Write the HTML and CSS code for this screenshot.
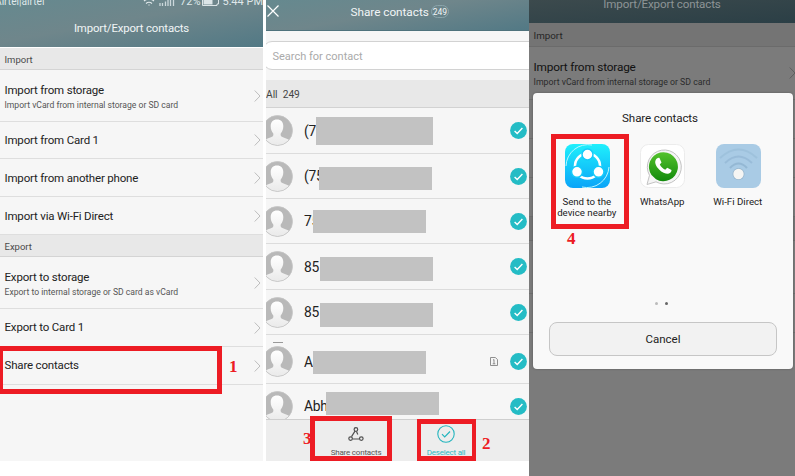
FILE: index.html
```html
<!DOCTYPE html>
<html lang="en">
<head>
<meta charset="utf-8">
<title>Share contacts</title>
<link rel="stylesheet" href="styles.css">
</head>
<body>
<svg class="defs" width="0" height="0">
  <defs>
    <linearGradient id="body" x1="0" y1="0" x2="0" y2="1"><stop offset="0" stop-color="#fff"/><stop offset="1" stop-color="#e9e9e9"/></linearGradient>
    <linearGradient id="blue" x1="0" y1="0" x2="0" y2="1"><stop offset="0" stop-color="#1ff0fc"/><stop offset="1" stop-color="#0aa4f8"/></linearGradient>
    <linearGradient id="green" x1="0" y1="0" x2="0" y2="1"><stop offset="0" stop-color="#54c22c"/><stop offset="1" stop-color="#128a0c"/></linearGradient>
    <clipPath id="round"><circle cx="15.5" cy="15.5" r="15"/></clipPath>
    <clipPath id="tile"><rect width="45" height="44" rx="8"/></clipPath>
    <symbol id="avatar" viewBox="0 0 31 31">
      <circle cx="15.5" cy="15.5" r="15" fill="#b9b9b9"/>
      <path clip-path="url(#round)" fill="url(#body)" d="M15 4.500c4 0 6.300 2.700 6.300 6.700 0 3-1 5.500-2.600 7.200-.3 2.300.2 3 2.300 3.900 3.500 1.300 6 2 7 3.700L25 31H5l-3-5c1-1.700 3.500-2.400 7-3.700 2.100-.9 2.600-1.600 2.300-3.900C9.700 16.700 8.700 14.200 8.700 11.200c0-4 2.300-6.700 6.300-6.700z"/>
      <circle cx="15.500" cy="15.500" r="15" fill="none" stroke="#c4c4c4" stroke-width=".8"/>
    </symbol>
    <symbol id="check" viewBox="0 0 17 17"><circle cx="8.500" cy="8.500" r="8.400" fill="#24bcc5"/><path d="M4.600 9l2.600 2.500 5.200-5.500" fill="none" stroke="#fff" stroke-width="1.400"/></symbol>
    <symbol id="chevron" viewBox="0 0 7 12"><path d="M.7.500l5.300 5.500-5.300 5.500" fill="none" stroke="currentColor" stroke-width="1"/></symbol>
  </defs>
</svg>
<main class="stage">
  <section class="screen menu">
    <header class="top top-menu">
      <div class="status">
        <span class="carrier">Airtel|airtel</span>
        <svg class="wifi" width="12" height="8" viewBox="0 0 12 8"><path d="M1 3q5-4 10 0M3 5.500q3-2.500 6 0M6 7.500v-1" fill="none" stroke="#e3eaec" stroke-width="1.200"/></svg>
        <svg class="signal" width="16" height="8" viewBox="0 0 16 8"><path d="M1 8V5M3.500 8V5M6.500 8V3.500M9 8V2M11.500 8V0M14.500 8V0" stroke="#cbd7da" stroke-width="1.300"/></svg>
        <span class="percent">72%</span>
        <svg class="battery" width="18" height="8" viewBox="0 0 18 8"><path d="M.5 0v7.500H15V6h1.500V0" fill="none" stroke="#dce5e7"/><path d="M1.500 0h9v6.500h-9z" fill="#dce5e7"/></svg>
        <span class="clock">5:44 PM</span>
      </div>
      <h1>Import/Export contacts</h1>
    </header>
    <h2>Import</h2>
    <div class="row tall"><div><b>Import from storage</b><small>Import vCard from internal storage or SD card</small></div><svg class="chev"><use href="#chevron"/></svg></div>
    <div class="row r36"><b>Import from Card 1</b><svg class="chev"><use href="#chevron"/></svg></div>
    <div class="row"><b>Import from another phone</b><svg class="chev"><use href="#chevron"/></svg></div>
    <div class="row"><b>Import via Wi-Fi Direct</b><svg class="chev"><use href="#chevron"/></svg></div>
    <h2>Export</h2>
    <div class="row tall"><div><b>Export to storage</b><small>Export to internal storage or SD card as vCard</small></div><svg class="chev"><use href="#chevron"/></svg></div>
    <div class="row low"><b>Export to Card 1</b><svg class="chev"><use href="#chevron"/></svg></div>
    <div class="row low"><b>Share contacts</b><svg class="chev"><use href="#chevron"/></svg></div>
    <div class="mark mark-1"></div><span class="num num-1">1</span>
  </section>

  <section class="screen picker">
    <header class="top top-picker">
      <svg class="close" width="12" height="12" viewBox="0 0 12 12"><path d="M.5.500l11 11M11.500.500l-11 11" stroke="#fff" stroke-width="1.200"/></svg>
      <h1>Share contacts</h1><span class="count">249</span>
    </header>
    <div class="searchbar"><div class="search">Search for contact</div></div>
    <h3>All&nbsp; 249</h3>
    <div class="contact c46"><svg class="av"><use href="#avatar"/></svg><span>(7</span><i class="bar b1"></i><svg class="ok"><use href="#check"/></svg></div>
    <div class="contact"><svg class="av"><use href="#avatar"/></svg><span>(75</span><i class="bar b2"></i><svg class="ok"><use href="#check"/></svg></div>
    <div class="contact"><svg class="av"><use href="#avatar"/></svg><span>75</span><i class="bar b3"></i><svg class="ok"><use href="#check"/></svg></div>
    <div class="contact c46"><svg class="av"><use href="#avatar"/></svg><span>85</span><i class="bar b4"></i><svg class="ok"><use href="#check"/></svg></div>
    <div class="contact"><svg class="av"><use href="#avatar"/></svg><span>85</span><i class="bar b4"></i><svg class="ok"><use href="#check"/></svg></div>
    <div class="contact c49"><svg class="av"><use href="#avatar"/></svg><span>A</span><i class="bar b6"></i>
      <svg class="sim" width="8" height="9" viewBox="0 0 8 9"><path d="M.5.500h4.800l2.200 2v6h-7zM3 3.200l1-.7v4.300M2.700 6.800h2.600" fill="none" stroke="#858585" stroke-width=".9"/></svg>
      <svg class="ok"><use href="#check"/></svg></div>
    <div class="contact last"><svg class="av"><use href="#avatar"/></svg><span>Abh</span><i class="bar b7"></i><svg class="ok"><use href="#check"/></svg></div>
    <footer class="actions">
      <div class="action share"><svg width="16" height="15" viewBox="0 0 16 15"><g fill="none" stroke="#505050" stroke-width="1.200"><path d="M7 4.200L3.500 9.600M4.700 12h6.600M8.500 4.500l1.300 3"/><circle cx="7.900" cy="2.500" r="1.800"/><circle cx="2.600" cy="11.600" r="1.800"/><circle cx="13.300" cy="11.600" r="1.800"/></g></svg>Share contacts</div>
      <div class="action deselect"><svg width="18" height="18" viewBox="0 0 18 18"><circle cx="9" cy="9" r="8.200" fill="none" stroke="#24b5be" stroke-width="1.100"/><path d="M5 9.200l2.700 2.800 5.300-5.500" fill="none" stroke="#24b5be" stroke-width="1.200"/></svg>Deselect all</div>
    </footer>
    <div class="mark mark-2"></div><span class="num num-2">2</span>
    <span class="num num-3">3</span><div class="mark mark-3"></div>
    <i class="dash"></i>
  </section>

  <section class="screen dimmed">
    <header class="top top-dim"><h1>Import/Export contacts</h1></header>
    <h2>Import</h2>
    <div class="row tall"><div><b>Import from storage</b><small>Import vCard from internal storage or SD card</small></div><svg class="chev"><use href="#chevron"/></svg></div>
    <div class="row"></div><div class="row"></div><div class="row"></div>
    <h2></h2>
    <div class="row tall"></div><div class="row"></div><div class="row end"></div>
    <div class="dialog">
      <h4>Share contacts</h4>
      <div class="apps">
        <div class="app"><svg width="45" height="44" viewBox="0 0 45 44"><g clip-path="url(#tile)"><rect width="45" height="44" fill="url(#blue)"/><path d="M1 22A22 22 0 0 1 27 1M44 23A22 22 0 0 1 17 43" fill="none" stroke="#b9f6ff" stroke-width="1"/></g><circle cx="22.500" cy="22" r="12.500" fill="none" stroke="#fff" stroke-width="2.600"/><g fill="#fff" stroke="#14cbfa" stroke-width="1.500"><circle cx="22.500" cy="10.500" r="5.500"/><circle cx="12" cy="27.800" r="5.500"/><circle cx="33.500" cy="27.800" r="5.500"/></g></svg><span>Send to the<br>device nearby</span></div>
        <div class="app"><svg width="45" height="44" viewBox="0 0 45 44"><rect x=".5" y=".5" width="44" height="43" rx="8" fill="#fff" stroke="#ececec"/><path d="M7 40.500l2.500-9.200A17 17 0 1 1 16 37.800z" fill="#f5f5f5" stroke="#bcbcbc" stroke-width=".9"/><path d="M11.500 31A14.500 14.500 0 1 1 16 35.200z" fill="url(#green)"/><path d="M15.500 16.500c.8-2 2.300-2.900 4-2.600l2 4.500-1.700 2.200c1.300 2.500 2.900 4 5.400 5.200l2-2 4.300 2.200c.3 1.800-1.600 3.500-3.400 3.800-2 .3-6-1.200-9-4.300-3-3-4.600-6.600-3.600-9z" fill="#fff"/></svg><span>WhatsApp</span></div>
        <div class="app"><svg width="45" height="44" viewBox="0 0 45 44"><rect width="45" height="44" rx="8" fill="#a9cbe5"/><g fill="none" stroke="#8fb3d0" stroke-width="2"><path d="M4 14q18.500-17 37 0" opacity=".4"/><path d="M9 19q13.500-13 27 0" opacity=".6"/><path d="M14 24q8.500-9 17 0" opacity=".8"/></g><circle cx="22.500" cy="30" r="6" fill="#96b5cd"/><circle cx="22.500" cy="30" r="5.200" fill="#f5f5f3"/></svg><span>Wi-Fi Direct</span></div>
      </div>
      <div class="dots"><i></i><i class="on"></i></div>
      <div class="cancel">Cancel</div>
    </div>
    <div class="mark mark-4"></div><span class="num num-4">4</span>
  </section>
</main>
</body>
</html>
```
FILE: styles.css
```css
* { box-sizing: border-box; }
body { margin: 0; background: #fff; font-family: Roboto, sans-serif; color: #222; overflow: hidden; }
h1, h2, h3, h4 { margin: 0; font-weight: 400; }
svg { display: block; flex: none; }
.defs { position: absolute; }
.stage { display: grid; grid-template-columns: 266px 263px 266px; width: 795px; height: 476px; }
.screen { position: relative; height: 461px; background: #f6f6f6; white-space: nowrap; }
.menu { width: 263px; }
.picker { overflow: hidden; }

.top { background: linear-gradient(170deg, #65898f 0%, #6f868b 45%, #527985 100%); color: #f1f5f6; }
.top h1 { font-size: 11.400px; line-height: 16px; letter-spacing: -0.15px; }
.top-menu { height: 48px; border-bottom: 1px solid #fff; text-align: center; overflow: hidden; }
.status { display: flex; height: 8px; margin-top: -2px; font-size: 11px; line-height: 11px; color: #dfe7e9; align-items: flex-end; }
.carrier { width: 153px; margin-left: -5px; text-align: left; font-size: 10.200px; }
.carrier, .percent, .clock { position: relative; top: 1px; }
.signal { margin-left: 4px; }
.percent { margin-left: 5px; }
.battery { margin-left: 1px; }
.clock { margin-left: 3px; }
.top-menu h1 { margin-top: 14px; }

h2 { height: 22px; padding-left: 4.500px; background: #e8e8e8; border-bottom: 1px solid #d4d4d4; font-size: 9.500px; line-height: 23px; color: #4a4a4a; }
.row { display: flex; align-items: center; justify-content: space-between; height: 38px; padding: 0 2.500px 0 4.500px; border-bottom: 1px solid #dedede; }
.r36 { height: 37px; }
.tall { height: 52px; }
.tall > div { padding-top: 3px; }
.row b { display: block; font-weight: 400; font-size: 11.500px; line-height: 15px; letter-spacing: -0.18px; color: #222; }
.row > b { padding-top: 1px; }
.low > b { padding: 0 0 1px; }
.row small { display: block; font-size: 8.600px; line-height: 14px; color: #555; }
.chev { width: 7px; height: 12px; color: #bdbdbd; }

.top-picker { display: flex; height: 31px; align-items: flex-start; border-bottom: 1px solid #4f727c; }
.close { margin: 5px 0 0 1px; }
.top-picker h1 { margin: 4px 0 0 71.500px; font-size: 11.800px; letter-spacing: -0.04px; }
.count { margin: 5px 0 0 2px; height: 13px; padding: 0 1px; border: 1px solid #8aa4aa; border-radius: 7px; font-size: 8.500px; line-height: 12px; }
.searchbar { height: 49px; padding-top: 10px; overflow: hidden; }
.search { height: 29px; width: 300px; margin-left: -3px; padding-left: 8.500px; background: #fff; border: 1px solid #d2d2d2; border-radius: 9px; font-size: 11px; line-height: 29px; color: #aaa; }
h3 { height: 28px; background: #e8e8e8; border-bottom: 1px solid #d2d2d2; font-size: 10.200px; line-height: 30px; color: #444; }
.contact { position: relative; display: flex; align-items: center; height: 45px; padding-right: 2.500px; border-bottom: 1px solid #dcdcdc; }
.c46 { height: 46px; }
.c49 { height: 49px; padding-top: 5px; }
.contact.last { height: 35px; align-items: flex-start; padding-top: 7px; border-bottom: 0; overflow: hidden; }
.av { width: 31px; height: 31px; margin-left: -4px; }
.contact span { margin-left: 11px; width: 30px; font-size: 13.800px; line-height: 31px; letter-spacing: -0.2px; color: #222; padding-top: 1px; }
.contact.last span { padding-top: 0; }
.ok { width: 17px; height: 17px; margin-left: auto; }
.sim { margin-left: auto; }
.sim + .ok { margin-left: 12px; }
.last .ok { margin-top: 7px; }
/* Redaction bars lie over the contact names */
.bar { position: absolute; width: 113px; height: 23px; background: #c2c2c2; }
.b1 { left: 50px; top: 9px; width: 117px; height: 28px; }
.b2 { left: 53px; top: 13px; }
.b3 { left: 47px; top: 11px; }
.b4 { left: 54px; top: 13px; height: 24px; }
.b6 { left: 47px; top: 16px; }
.b7 { left: 60px; top: 8px; }
.dash { position: absolute; left: 7px; top: 342px; width: 10px; height: 1px; background: #999; }

.actions { display: grid; grid-template-columns: 180px 1fr; height: 42px; background: #ededed; border-top: 1px solid #cfcfcf; }
.action { display: flex; flex-direction: column; align-items: center; justify-content: space-between; padding: 7px 0 3px; font-size: 8px; line-height: 10px; letter-spacing: -0.2px; color: #555; }
.deselect { width: 0; color: #2bb9c2; padding-top: 5px; }

/* Red callouts */
.mark { position: absolute; border: 5px solid #ed1c24; }
.num { position: absolute; font: bold 17px/20px "Liberation Serif", serif; color: #ed1c24; }
.mark-1 { left: -2px; top: 346px; width: 224px; height: 48px; }
.num-1 { left: 229px; top: 357px; }
.mark-2 { left: 151px; top: 419px; width: 59px; height: 42px; border-width: 5px 4px; }
.num-2 { left: 216px; top: 434px; }
.mark-3 { left: 44px; top: 416px; width: 82px; height: 45px; }
.num-3 { left: 37px; top: 429px; }
.mark-4 { left: 22px; top: 134px; width: 78px; height: 95px; }
.num-4 { left: 38px; top: 229px; }

.dimmed { height: 476px; background: #7b7b7b; overflow: hidden; }
.dimmed .top-dim { height: 23px; background: linear-gradient(175deg, #3c4a4d, #2b3f46); color: #8d9496; text-align: center; overflow: hidden; }
.top-dim h1 { margin-top: -4px; font-size: 11.600px; }
.dimmed h2 { height: 24px; background: #747474; border-color: #6b6b6b; font-size: 9.800px; line-height: 25px; color: #262626; }
.dimmed .row { height: 39px; border-color: #6e6e6e; padding-right: 0; }
.dimmed .tall { height: 53px; }
.dimmed .end { border: 0; }
.dimmed b { color: #111; font-size: 11.800px; }
.dimmed small { color: #2b2b2b; font-size: 8.750px; line-height: 15px; }
.dimmed .chev { color: #5e5e5e; margin-right: -1px; }
.dialog { position: absolute; left: 4px; top: 93px; width: 260px; height: 276px; padding: 16px 16px 13px; border-radius: 4px; background: #f9f9f9; box-shadow: 0 0 2px #555; display: flex; flex-direction: column; }
h4 { height: 35px; text-align: center; font-size: 11.600px; line-height: 18px; letter-spacing: -0.12px; padding-right: 6px; }
.apps { display: grid; grid-template-columns: repeat(3, 75.500px); height: 158px; }
.app { display: flex; flex-direction: column; align-items: center; text-align: center; font-size: 9.700px; line-height: 11px; }
.app svg { margin-left: 1px; }
.app span { margin-top: 8px; }
.dots { display: flex; justify-content: center; gap: 7px; height: 20px; padding-right: 4px; }
.dots i { width: 3px; height: 3px; border-radius: 50%; background: #bbb; }
.dots .on { background: #666; }
.cancel { height: 34px; border: 1px solid #c6c6c6; border-radius: 8px; background: #f2f2f2; text-align: center; font-size: 11.500px; line-height: 33px; }
```
